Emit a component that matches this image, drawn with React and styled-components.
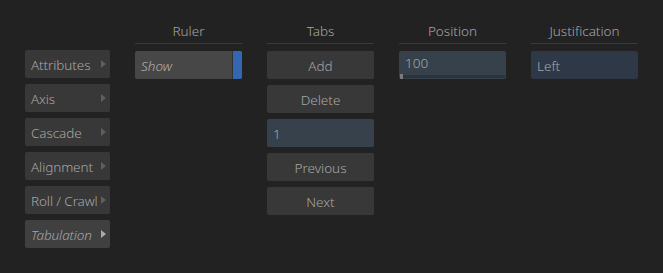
import React from "react"
import styled, { createGlobalStyle } from "styled-components"

const Global = createGlobalStyle`
  html, body {
    margin: 0;
    padding: 0;
    background: #222222;
  }
  body {
    font-family: "Noto Sans", "Open Sans", sans-serif;
    font-weight: 300;
    color: #a6a6a6;
    font-size: 13.5px;
  }
`

const Page = styled.div`
  width: 663px;
  height: 273px;
  box-sizing: border-box;
  padding: 21px 25px 0 25px;
  display: flex;
  gap: 25px;
`

const Nav = styled.div`
  width: 85px;
  padding-top: 29px;
  display: flex;
  flex-direction: column;
  gap: 6px;
`

const NavButton = styled.div`
  position: relative;
  height: 28px;
  border-radius: 2px;
  background: ${(p) => (p.active ? "#404040" : "#383838")};
  font-style: ${(p) => (p.active ? "italic" : "normal")};
  display: flex;
  align-items: center;
  padding: 1px 0 0 6px;
  box-sizing: border-box;
  white-space: nowrap;
  letter-spacing: -0.1px;

  &::after {
    content: "";
    position: absolute;
    right: 4px;
    top: 10px;
    width: 0;
    height: 0;
    border-top: 4px solid transparent;
    border-bottom: 4px solid transparent;
    border-left: 5px solid ${(p) => (p.active ? "#aaaaaa" : "#5e5e5e")};
  }
`

const Column = styled.div`
  width: 107px;
  display: flex;
  flex-direction: column;
  gap: 6px;
`

const Header = styled.div`
  height: 22px;
  line-height: 20px;
  text-align: center;
  border-bottom: 1px solid #3a3a3a;
  margin-bottom: 1px;
`

const Button = styled.div`
  height: 28px;
  border-radius: 2px;
  background: #383838;
  display: flex;
  align-items: center;
  justify-content: center;
  padding-top: 1px;
  box-sizing: border-box;
`

const Field = styled.div`
  position: relative;
  height: 28px;
  border-radius: 2px;
  background: ${(p) => p.bg || "#37414b"};
  display: flex;
  align-items: ${(p) => (p.top ? "flex-start" : "center")};
  padding: ${(p) => (p.top ? "3px 6px 0" : "1px 6px 0")};
  box-sizing: border-box;
  overflow: hidden;
`

const Toggle = styled.div`
  height: 28px;
  border-radius: 2px;
  background: #474747;
  display: flex;
  overflow: hidden;
`

const ToggleLabel = styled.div`
  flex: 1;
  display: flex;
  align-items: center;
  padding: 1px 6px 0;
  font-style: italic;
  color: #b0b0b0;
  border-right: 1px solid #333;
`

const ToggleOn = styled.div`
  width: 9px;
  background: #3467b0;
`

const Track = styled.div`
  position: absolute;
  left: 1px;
  right: 1px;
  bottom: 1px;
  height: 3px;
  background: #2c333b;
`

const Thumb = styled.div`
  position: absolute;
  left: 1px;
  bottom: 0;
  width: 3px;
  height: 5px;
  background: #7a7a7a;
`

const navItems = ["Attributes", "Axis", "Cascade", "Alignment", "Roll / Crawl", "Tabulation"]

export default function App() {
  return (
    <>
      <Global />
      <Page>
        <Nav>
          {navItems.map((n) => (
            <NavButton key={n} active={n === "Tabulation"}>
              {n}
            </NavButton>
          ))}
        </Nav>
        <Column>
          <Header>Ruler</Header>
          <Toggle>
            <ToggleLabel>Show</ToggleLabel>
            <ToggleOn />
          </Toggle>
        </Column>
        <Column>
          <Header>Tabs</Header>
          <Button>Add</Button>
          <Button>Delete</Button>
          <Field>1</Field>
          <Button>Previous</Button>
          <Button>Next</Button>
        </Column>
        <Column>
          <Header>Position</Header>
          <Field top>
            100
            <Track />
            <Thumb />
          </Field>
        </Column>
        <Column>
          <Header>Justification</Header>
          <Field bg="#2f3846">Left</Field>
        </Column>
      </Page>
    </>
  )
}
